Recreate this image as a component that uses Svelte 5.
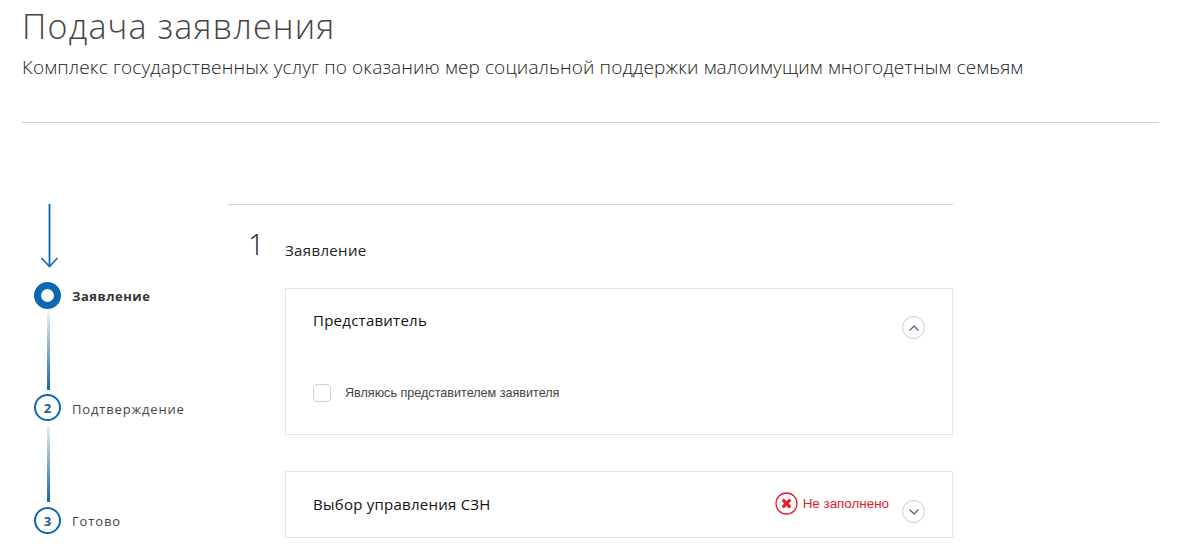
<script>
  const steps = [
    { n: '', label: 'Заявление', active: true },
    { n: '2', label: 'Подтверждение' },
    { n: '3', label: 'Готово' }
  ];
</script>

<div class="page">
  <header class="head">
    <h1>Подача заявления</h1>
    <p>Комплекс государственных услуг по оказанию мер социальной поддержки малоимущим многодетным семьям</p>
  </header>

  <div class="body">
    <aside class="steps">
      <svg class="arrow" width="20" height="64" viewBox="0 0 20 64" fill="none" stroke="#0b68b0">
        <path d="M9.5 0V62" stroke-width="1.8" />
        <path d="M1.5 54L9.5 62.5L17.5 54" stroke-width="1.6" />
      </svg>
      {#each steps as s, i}
        {#if i > 0}
          <div class="link" class:late={i === 2}></div>
        {/if}
        <div class="step">
          <span class="dot" class:active={s.active}>{s.n}</span>
          <span class="lbl" class:on={s.active} class:mid={i === 1}>{s.label}</span>
        </div>
      {/each}
    </aside>

    <main class="main">
      <div class="title">
        <span class="num">1</span>
        <span class="name">Заявление</span>
      </div>

      <section class="card first">
        <div class="row">
          <h2>Представитель</h2>
          <button class="tog up" aria-label="Свернуть">
            <svg width="10" height="6" viewBox="0 0 10 6" fill="none" stroke="#35608c" stroke-width="1.2"><path d="M0.5 5.5L5 1L9.5 5.5" /></svg>
          </button>
        </div>
        <label class="check">
          <span class="box"></span>
          <span>Являюсь представителем заявителя</span>
        </label>
      </section>

      <section class="card second">
        <h2>Выбор управления СЗН</h2>
        <span class="err">
          <svg width="23" height="23" viewBox="0 0 23 23" fill="none">
            <circle cx="11.5" cy="11.5" r="10.5" stroke="#e2202c" stroke-width="1.3" />
            <path d="M7.7 7.7L15.3 15.3M15.3 7.7L7.7 15.3" stroke="#e2202c" stroke-width="3.2" />
          </svg>
          Не заполнено
        </span>
        <button class="tog down" aria-label="Развернуть">
          <svg width="10" height="6" viewBox="0 0 10 6" fill="none" stroke="#35608c" stroke-width="1.2"><path d="M0.5 0.5L5 5L9.5 0.5" /></svg>
        </button>
      </section>
    </main>
  </div>
</div>

<style>
  :global(body) {
    margin: 0;
    background: #fff;
    overflow: hidden;
  }
  .page {
    height: 555px;
    overflow: hidden;
    padding: 0 28px 0 22px;
    font-family: "Open Sans", sans-serif;
    color: #333;
  }
  .head {
    height: 122px;
    border-bottom: 1px solid #d2d2d2;
  }
  h1 {
    margin: 0;
    padding-top: 3px;
    font-size: 34px;
    line-height: 46px;
    font-weight: 300;
    letter-spacing: 1.2px;
    color: #444;
  }
  .head p {
    margin: 6px 0 0;
    font-size: 19px;
    line-height: 24px;
    font-weight: 300;
    letter-spacing: 0.13px;
    color: #222;
  }
  .body {
    display: flex;
    margin-top: 81px;
  }
  .steps {
    width: 206px;
    flex: none;
    display: flex;
    flex-direction: column;
    padding-left: 12px;
    box-sizing: border-box;
  }
  .arrow {
    display: block;
    margin: 0 0 14px 6px;
  }
  .step {
    display: flex;
    align-items: center;
    gap: 11px;
    height: 27px;
  }
  .dot {
    box-sizing: border-box;
    width: 27px;
    height: 27px;
    border-radius: 50%;
    border: 2px solid #0b68b0;
    color: #2a5a94;
    font-size: 13px;
    font-weight: 700;
    display: flex;
    align-items: center;
    justify-content: center;
  }
  .dot.active {
    border-width: 7px;
  }
  .lbl {
    font-size: 13px;
    letter-spacing: 0.85px;
    color: #444;
  }
  .lbl.mid {
    padding-top: 2px;
  }
  .lbl.on {
    font-weight: 700;
    color: #333;
    letter-spacing: 0.5px;
  }
  .link {
    width: 3px;
    height: 77px;
    margin: 4px 0 4px 13px;
    background: linear-gradient(#eceef0, #0b68b0);
  }
  .link.late {
    height: 76px;
    margin-top: 5px;
    margin-bottom: 5px;
  }
  .main {
    width: 725px;
    flex: none;
    border-top: 1px solid #d2d2d2;
  }
  .title {
    display: flex;
    align-items: baseline;
    height: 83px;
    padding: 19px 0 0 20px;
    box-sizing: border-box;
  }
  .num {
    width: 37px;
    font-size: 29px;
    line-height: 40px;
    font-weight: 300;
    color: #222;
  }
  .name {
    position: relative;
    top: 1px;
    font-size: 15px;
    letter-spacing: 0.35px;
    color: #222;
  }
  .card {
    margin-left: 57px;
    box-sizing: border-box;
    border: 1px solid #e4e4e4;
  }
  .first {
    height: 147px;
    padding: 21px 27px 0 27px;
  }
  .row {
    display: flex;
    justify-content: space-between;
  }
  h2 {
    margin: 0;
    font-size: 15px;
    line-height: 20px;
    font-weight: 400;
    letter-spacing: 0.25px;
    color: #111;
  }
  .tog {
    box-sizing: border-box;
    width: 23px;
    height: 23px;
    padding: 0;
    border: 1px solid #ccc;
    border-radius: 50%;
    background: #fff;
    display: flex;
    align-items: center;
    justify-content: center;
  }
  .up {
    margin-top: 6px;
  }
  .check {
    display: flex;
    align-items: center;
    gap: 14px;
    margin-top: 45px;
    font-family: "Liberation Sans", sans-serif;
    font-size: 12.6px;
    color: #444;
  }
  .box {
    box-sizing: border-box;
    width: 18px;
    height: 18px;
    border: 1px solid #d0d0d0;
    border-radius: 4px;
  }
  .second {
    height: 67px;
    margin-top: 36px;
    padding: 0 27px 2px 27px;
    display: flex;
    align-items: center;
  }
  .second h2 {
    flex: 1;
  }
  .err {
    display: flex;
    align-items: center;
    gap: 5px;
    margin-right: 13px;
    margin-top: -1px;
    font-family: "Liberation Sans", sans-serif;
    font-size: 13.4px;
    color: #e2202c;
  }
  .down {
    margin-top: 16px;
  }
</style>
